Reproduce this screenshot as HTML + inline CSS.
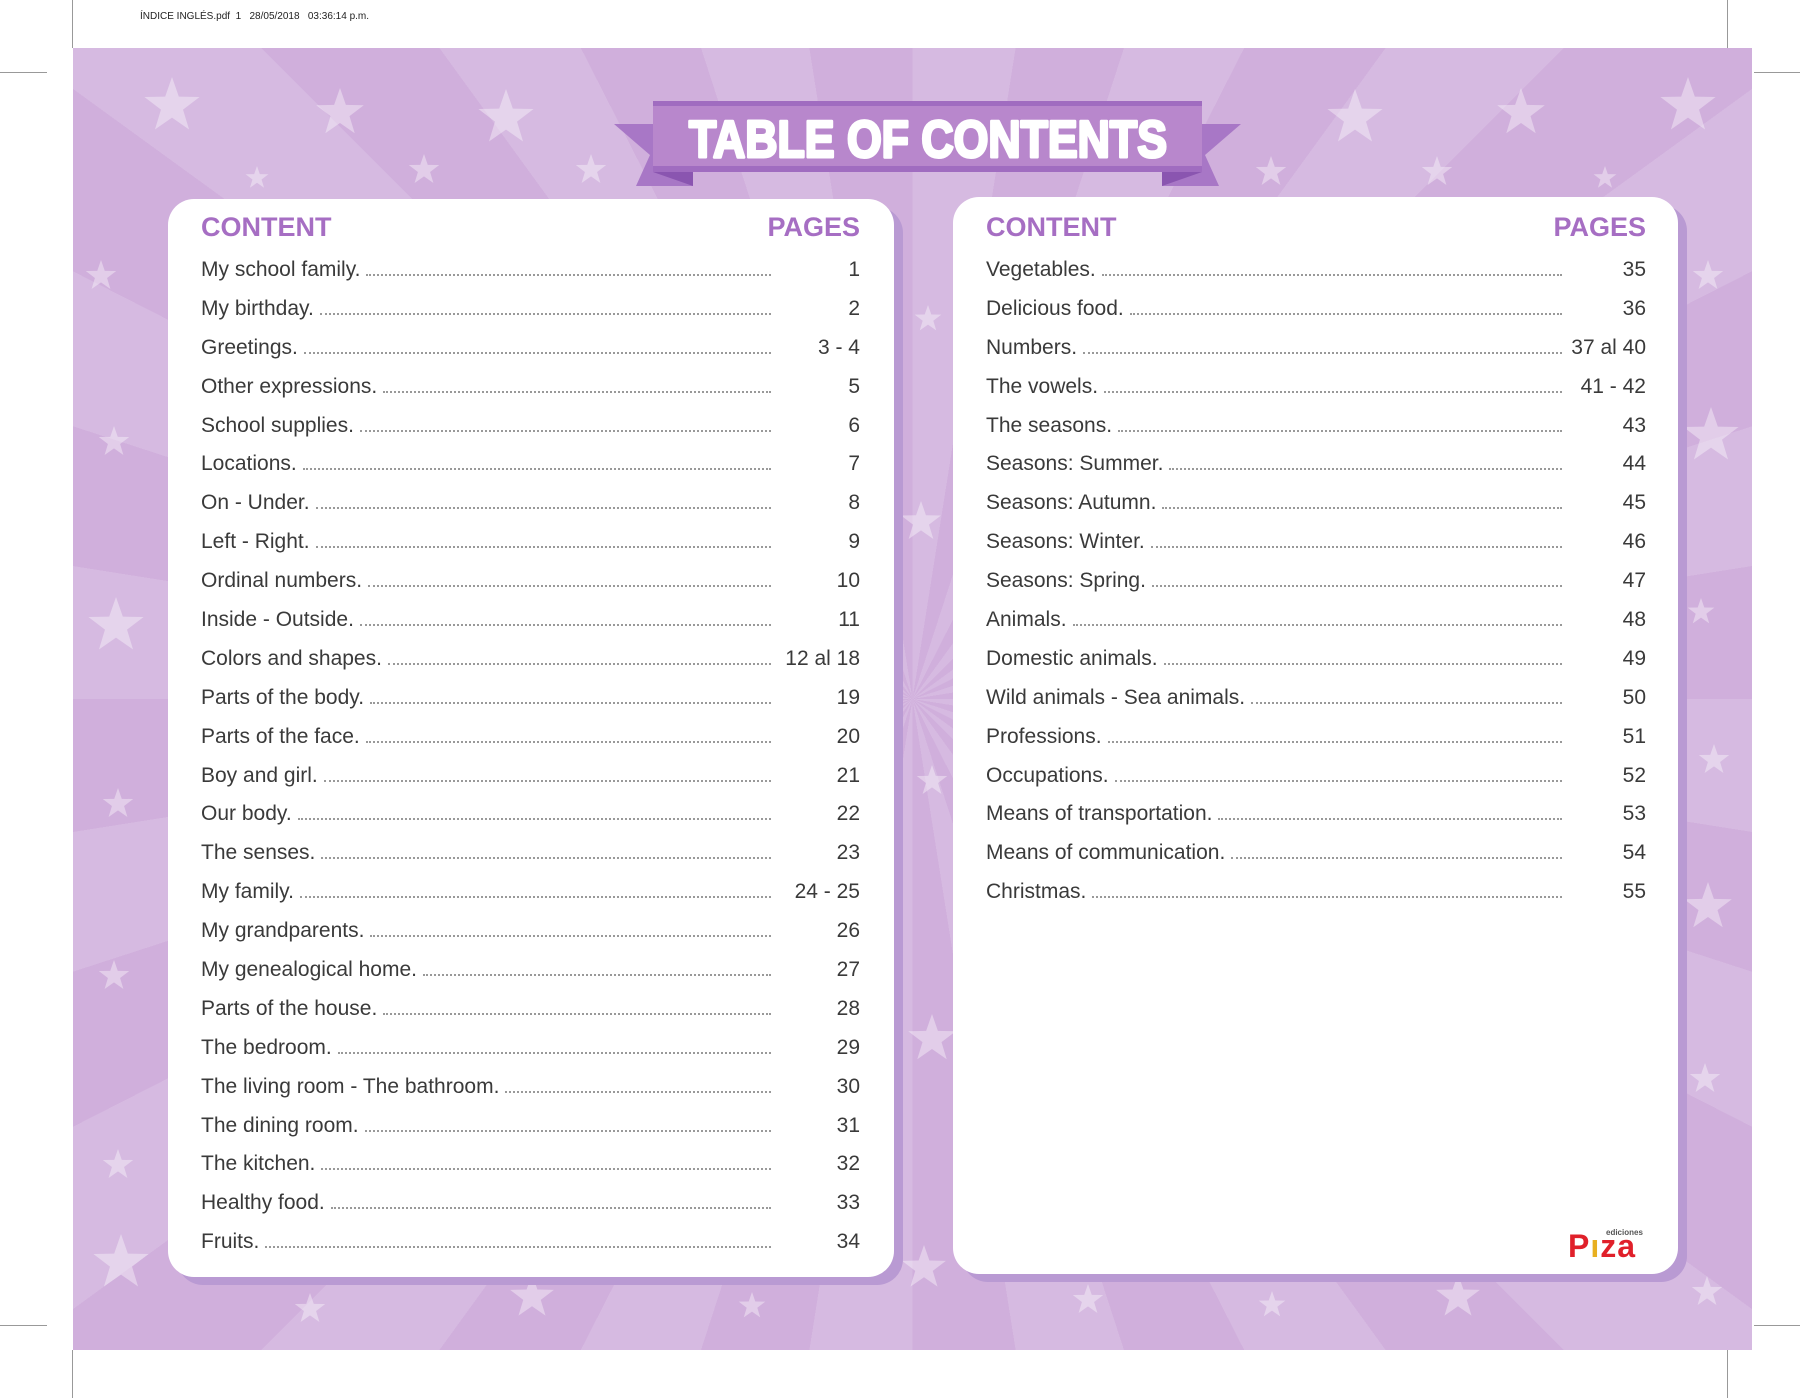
<!DOCTYPE html>
<html><head><meta charset="utf-8">
<style>
*{margin:0;padding:0;box-sizing:border-box}
html,body{width:1800px;height:1398px;overflow:hidden}
body{background:#fff;position:relative;font-family:"Liberation Sans",sans-serif}
.bg{position:absolute;left:73px;top:48px;width:1679px;height:1302px;background:repeating-conic-gradient(from 0deg at 50% 50%,#d6bae1 0deg 9deg,#d0afdc 9deg 18deg)}
.line{position:absolute;background:#999}
.meta{position:absolute;left:140px;top:11px;font-size:10px;color:#222}
.card{position:absolute;background:#fff;border-radius:26px;box-shadow:9px 8px 0 #b99ad3}
.hd{position:absolute;top:212px;font-size:27px;font-weight:bold;color:#a66ec3}
.rows{position:absolute;top:251px}
.row{display:flex;align-items:baseline;height:38.9px;font-size:21px;color:#3a3a3a;line-height:38.9px}
.row .d{flex:1;border-bottom:2px dotted #999;margin:0 0 7px 6px;height:1px}
.row .p{text-align:right}
</style></head><body>
<div class="line" style="left:72px;top:0;width:1px;height:48px"></div>
<div class="line" style="left:0;top:72px;width:47px;height:1px"></div>
<div class="line" style="left:1727px;top:0;width:1px;height:48px"></div>
<div class="line" style="left:1754px;top:72px;width:46px;height:1px"></div>
<div class="line" style="left:72px;top:1350px;width:1px;height:48px"></div>
<div class="line" style="left:0;top:1325px;width:47px;height:1px"></div>
<div class="line" style="left:1727px;top:1350px;width:1px;height:48px"></div>
<div class="line" style="left:1754px;top:1325px;width:46px;height:1px"></div>
<div class="meta">ÍNDICE INGLÉS.pdf &nbsp;1 &nbsp; 28/05/2018 &nbsp; 03:36:14 p.m.</div>
<div class="bg"></div>
<svg style="position:absolute;left:0;top:0" width="1800" height="1398">
<defs><polygon id="s" points="0,-1 0.235,-0.324 0.951,-0.309 0.38,0.124 0.588,0.809 0,0.4 -0.588,0.809 -0.38,0.124 -0.951,-0.309 -0.235,-0.324"/></defs>
<g fill="#fff" fill-opacity=".38">
<use href="#s" transform="translate(172,106) scale(29)"/><use href="#s" transform="translate(340,113) scale(25)"/><use href="#s" transform="translate(506,118) scale(29)"/><use href="#s" transform="translate(257,178) scale(12)"/><use href="#s" transform="translate(424,170) scale(16)"/><use href="#s" transform="translate(591,170) scale(16)"/><use href="#s" transform="translate(101,276) scale(16)"/><use href="#s" transform="translate(114,442) scale(16)"/><use href="#s" transform="translate(116,626) scale(29)"/><use href="#s" transform="translate(118,804) scale(16)"/><use href="#s" transform="translate(114,976) scale(16)"/><use href="#s" transform="translate(118,1165) scale(16)"/><use href="#s" transform="translate(121,1263) scale(29)"/><use href="#s" transform="translate(310,1309) scale(16)"/><use href="#s" transform="translate(532,1297) scale(23)"/><use href="#s" transform="translate(752,1306) scale(14)"/><use href="#s" transform="translate(928,319) scale(14)"/><use href="#s" transform="translate(921,522) scale(21)"/><use href="#s" transform="translate(932,781) scale(16)"/><use href="#s" transform="translate(932,1039) scale(25)"/><use href="#s" transform="translate(924,1268) scale(23)"/><use href="#s" transform="translate(1355,118) scale(29)"/><use href="#s" transform="translate(1521,113) scale(25)"/><use href="#s" transform="translate(1688,106) scale(29)"/><use href="#s" transform="translate(1271,172) scale(16)"/><use href="#s" transform="translate(1437,172) scale(16)"/><use href="#s" transform="translate(1605,178) scale(12)"/><use href="#s" transform="translate(1708,276) scale(16)"/><use href="#s" transform="translate(1711,436) scale(29)"/><use href="#s" transform="translate(1701,612) scale(14)"/><use href="#s" transform="translate(1714,760) scale(16)"/><use href="#s" transform="translate(1708,907) scale(25)"/><use href="#s" transform="translate(1705,1079) scale(16)"/><use href="#s" transform="translate(1707,1292) scale(16)"/><use href="#s" transform="translate(1088,1300) scale(16)"/><use href="#s" transform="translate(1272,1305) scale(14)"/><use href="#s" transform="translate(1458,1297) scale(23)"/>
</g>
<polygon points="614,124 693,124 693,186 636,186 650,155" fill="#a877c6"/>
<polygon points="1241,124 1162,124 1162,186 1219,186 1205,155" fill="#a877c6"/>
<polygon points="653,172 693,186 693,172" fill="#8a55b0"/>
<polygon points="1202,172 1162,186 1162,172" fill="#8a55b0"/>
<rect x="653" y="101" width="549" height="71" fill="#b887cc"/>
<rect x="653" y="101" width="549" height="5" fill="#a06cc0"/>
<rect x="653" y="166" width="549" height="6" fill="#a06cc0"/>
<text x="689" y="157" textLength="478" lengthAdjust="spacingAndGlyphs" font-family="Liberation Sans" font-weight="bold" font-size="52" fill="#fff" stroke="#fff" stroke-width="3" stroke-linejoin="round">TABLE OF CONTENTS</text>
</svg>
<div class="card" style="left:168px;top:199px;width:726px;height:1078px"></div>
<div class="card" style="left:953px;top:197px;width:725px;height:1077px"></div>
<div class="hd" style="left:201px">CONTENT</div>
<div class="hd" style="right:940px">PAGES</div>
<div class="hd" style="left:986px">CONTENT</div>
<div class="hd" style="right:154px">PAGES</div>
<div class="rows" style="left:201px;width:659px">
<div class="row"><span>My school family.</span><span class="d"></span><span class="p" style="width:89px">1</span></div>
<div class="row"><span>My birthday.</span><span class="d"></span><span class="p" style="width:89px">2</span></div>
<div class="row"><span>Greetings.</span><span class="d"></span><span class="p" style="width:89px">3 - 4</span></div>
<div class="row"><span>Other expressions.</span><span class="d"></span><span class="p" style="width:89px">5</span></div>
<div class="row"><span>School supplies.</span><span class="d"></span><span class="p" style="width:89px">6</span></div>
<div class="row"><span>Locations.</span><span class="d"></span><span class="p" style="width:89px">7</span></div>
<div class="row"><span>On - Under.</span><span class="d"></span><span class="p" style="width:89px">8</span></div>
<div class="row"><span>Left - Right.</span><span class="d"></span><span class="p" style="width:89px">9</span></div>
<div class="row"><span>Ordinal numbers.</span><span class="d"></span><span class="p" style="width:89px">10</span></div>
<div class="row"><span>Inside - Outside.</span><span class="d"></span><span class="p" style="width:89px">11</span></div>
<div class="row"><span>Colors and shapes.</span><span class="d"></span><span class="p" style="width:89px">12 al 18</span></div>
<div class="row"><span>Parts of the body.</span><span class="d"></span><span class="p" style="width:89px">19</span></div>
<div class="row"><span>Parts of the face.</span><span class="d"></span><span class="p" style="width:89px">20</span></div>
<div class="row"><span>Boy and girl.</span><span class="d"></span><span class="p" style="width:89px">21</span></div>
<div class="row"><span>Our body.</span><span class="d"></span><span class="p" style="width:89px">22</span></div>
<div class="row"><span>The senses.</span><span class="d"></span><span class="p" style="width:89px">23</span></div>
<div class="row"><span>My family.</span><span class="d"></span><span class="p" style="width:89px">24 - 25</span></div>
<div class="row"><span>My grandparents.</span><span class="d"></span><span class="p" style="width:89px">26</span></div>
<div class="row"><span>My genealogical home.</span><span class="d"></span><span class="p" style="width:89px">27</span></div>
<div class="row"><span>Parts of the house.</span><span class="d"></span><span class="p" style="width:89px">28</span></div>
<div class="row"><span>The bedroom.</span><span class="d"></span><span class="p" style="width:89px">29</span></div>
<div class="row"><span>The living room - The bathroom.</span><span class="d"></span><span class="p" style="width:89px">30</span></div>
<div class="row"><span>The dining room.</span><span class="d"></span><span class="p" style="width:89px">31</span></div>
<div class="row"><span>The kitchen.</span><span class="d"></span><span class="p" style="width:89px">32</span></div>
<div class="row"><span>Healthy food.</span><span class="d"></span><span class="p" style="width:89px">33</span></div>
<div class="row"><span>Fruits.</span><span class="d"></span><span class="p" style="width:89px">34</span></div>
</div>
<div class="rows" style="left:986px;width:660px">
<div class="row"><span>Vegetables.</span><span class="d"></span><span class="p" style="width:84px">35</span></div>
<div class="row"><span>Delicious food.</span><span class="d"></span><span class="p" style="width:84px">36</span></div>
<div class="row"><span>Numbers.</span><span class="d"></span><span class="p" style="width:84px">37 al 40</span></div>
<div class="row"><span>The vowels.</span><span class="d"></span><span class="p" style="width:84px">41 - 42</span></div>
<div class="row"><span>The seasons.</span><span class="d"></span><span class="p" style="width:84px">43</span></div>
<div class="row"><span>Seasons: Summer.</span><span class="d"></span><span class="p" style="width:84px">44</span></div>
<div class="row"><span>Seasons: Autumn.</span><span class="d"></span><span class="p" style="width:84px">45</span></div>
<div class="row"><span>Seasons: Winter.</span><span class="d"></span><span class="p" style="width:84px">46</span></div>
<div class="row"><span>Seasons: Spring.</span><span class="d"></span><span class="p" style="width:84px">47</span></div>
<div class="row"><span>Animals.</span><span class="d"></span><span class="p" style="width:84px">48</span></div>
<div class="row"><span>Domestic animals.</span><span class="d"></span><span class="p" style="width:84px">49</span></div>
<div class="row"><span>Wild animals - Sea animals.</span><span class="d"></span><span class="p" style="width:84px">50</span></div>
<div class="row"><span>Professions.</span><span class="d"></span><span class="p" style="width:84px">51</span></div>
<div class="row"><span>Occupations.</span><span class="d"></span><span class="p" style="width:84px">52</span></div>
<div class="row"><span>Means of transportation.</span><span class="d"></span><span class="p" style="width:84px">53</span></div>
<div class="row"><span>Means of communication.</span><span class="d"></span><span class="p" style="width:84px">54</span></div>
<div class="row"><span>Christmas.</span><span class="d"></span><span class="p" style="width:84px">55</span></div>
</div>
<div style="position:absolute;left:1606px;top:1228px;font-size:8px;font-weight:bold;color:#555">ediciones</div>
<div style="position:absolute;left:1568px;top:1230px;font-size:32px;line-height:32px;font-weight:bold;color:#e0202a;letter-spacing:1px">P<span style="color:#e8b020">ı</span>za</div>
</body></html>
